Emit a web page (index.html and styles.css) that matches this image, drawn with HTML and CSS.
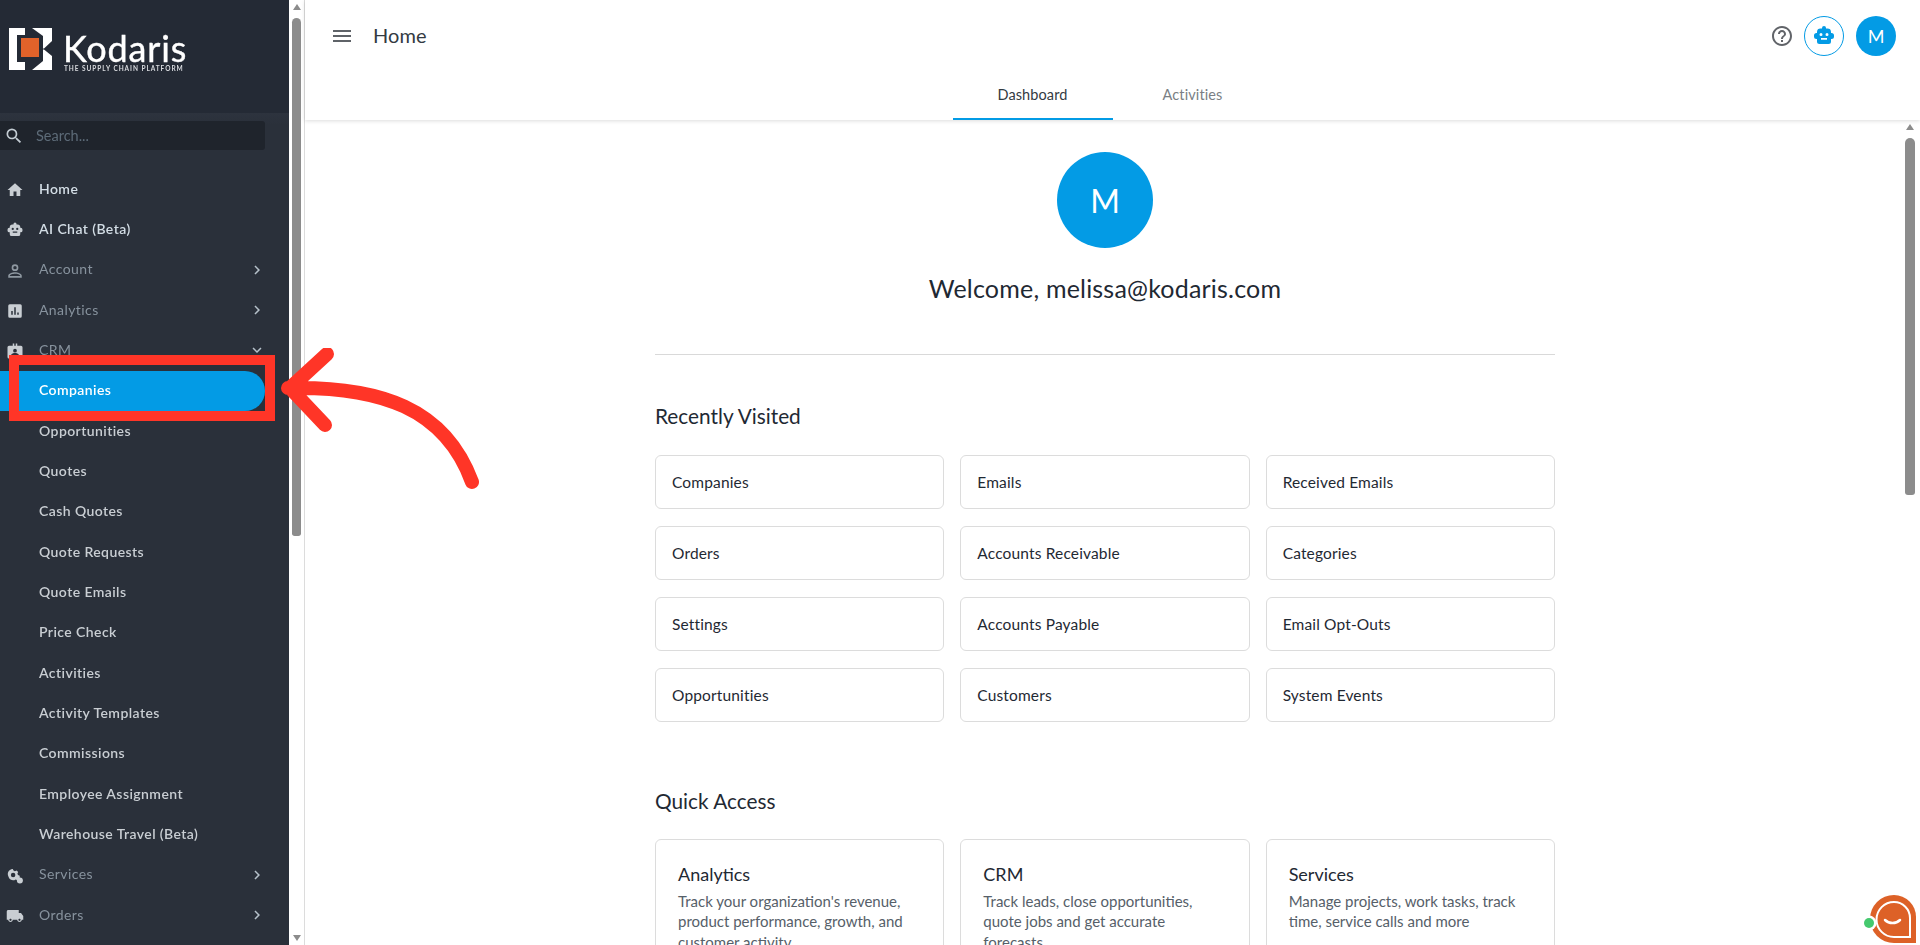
FILE: index.html
```html
<!DOCTYPE html>
<html lang="en">
<head>
    <meta charset="UTF-8">
    <meta name="viewport" content="width=device-width, initial-scale=1.0">
    <title>Kodaris - Home</title>
    <link rel="stylesheet" href="styles.css">
</head>
<body>
    <svg class="icon-defs" width="0" height="0">
        <symbol id="i-home" viewBox="0 0 24 24"><path d="M10 20v-6h4v6h5v-8h3L12 3 2 12h3v8z"/></symbol>
        <symbol id="i-search" viewBox="0 0 24 24"><path d="M15.5 14h-.79l-.28-.27A6.47 6.47 0 0 0 16 9.5 6.5 6.5 0 1 0 9.5 16c1.61 0 3.09-.59 4.23-1.57l.27.28v.79l5 4.99L20.49 19l-4.99-5zm-6 0C7.01 14 5 11.99 5 9.5S7.01 5 9.5 5 14 7.01 14 9.5 11.99 14 9.5 14z"/></symbol>
        <symbol id="i-bot" viewBox="0 0 24 24"><path d="M12 2a2 2 0 0 1 2 2v.6h1.5A3.5 3.5 0 0 1 19 8v1h.5A2.5 2.5 0 0 1 22 11.500v1a2.500 2.500 0 0 1-2.500 2.500H19v2.500a2.500 2.500 0 0 1-2.500 2.500h-9A2.500 2.500 0 0 1 5 17.500V15h-.5A2.500 2.500 0 0 1 2 12.500v-1A2.500 2.500 0 0 1 4.500 9H5V8a3.500 3.500 0 0 1 3.500-3.400H10V4a2 2 0 0 1 2-2zM9 9a1.500 1.500 0 1 0 0 3 1.500 1.500 0 0 0 0-3zm6 0a1.500 1.500 0 1 0 0 3 1.500 1.500 0 0 0 0-3zm-6 5v1.800h6V14z" fill-rule="evenodd"/></symbol>
        <symbol id="i-account" viewBox="0 0 24 24"><path d="M12 3a4.500 4.500 0 1 1 0 9 4.500 4.500 0 0 1 0-9zm0 2.200a2.300 2.300 0 1 0 0 4.600 2.300 2.300 0 0 0 0-4.600zM12 13.500c3.500 0 9 1.700 9 4.500v3H3v-3c0-2.800 5.500-4.500 9-4.500zm0 2.200c-2.800 0-6.800 1.300-6.800 2.300v.8h13.600V18c0-1-4-2.300-6.800-2.300z" fill-rule="evenodd"/></symbol>
        <symbol id="i-analytics" viewBox="0 0 24 24"><path d="M5 3h14a2 2 0 0 1 2 2v14a2 2 0 0 1-2 2H5a2 2 0 0 1-2-2V5a2 2 0 0 1 2-2zm2 9v5h2v-5zm4-5v10h2V7zm4 7v3h2v-3z" fill-rule="evenodd"/></symbol>
        <symbol id="i-crm" viewBox="0 0 24 24"><path d="M9 2h2v3h2V2h2v3h5a2 2 0 0 1 2 2v13a2 2 0 0 1-2 2H4a2 2 0 0 1-2-2V7a2 2 0 0 1 2-2h5zm3 7a2.500 2.500 0 1 0 0 5 2.500 2.500 0 0 0 0-5zm-5 9h10v-1c0-1.500-3.300-2.300-5-2.300S7 15.500 7 17z" fill-rule="evenodd"/></symbol>
        <symbol id="i-services" viewBox="0 0 24 24"><path d="M9 2.500l1 2.300 1.900.8 2.300-1 2 2-1 2.300.8 1.900 2.300 1v2.800l-2.300 1-.8 1.900-2.300-.9a6.500 6.500 0 0 1-6.900.1 7 7 0 0 1-2.800-4.200 7 7 0 0 1 .8-7.500 7 7 0 0 1 4-2.500zM9.500 7.500a3 3 0 1 0 0 6 3 3 0 0 0 0-6z" fill-rule="evenodd"/><circle cx="18.500" cy="18" r="4"/></symbol>
        <symbol id="i-truck" viewBox="0 0 24 24"><path d="M20 8h-3V4H3c-1.100 0-2 .9-2 2v11h2c0 1.660 1.340 3 3 3s3-1.340 3-3h6c0 1.660 1.340 3 3 3s3-1.340 3-3h2v-5l-3-4zM6 18.500c-.83 0-1.500-.67-1.500-1.500s.67-1.500 1.500-1.500 1.500.67 1.500 1.500-.67 1.500-1.500 1.500zm12 0c-.83 0-1.500-.67-1.500-1.500s.67-1.500 1.500-1.500 1.500.67 1.500 1.500-.67 1.500-1.500 1.500z"/></symbol>
        <symbol id="i-right" viewBox="0 0 24 24"><path d="M10 6 8.590 7.410 13.170 12l-4.580 4.590L10 18l6-6z"/></symbol>
        <symbol id="i-down" viewBox="0 0 24 24"><path d="M16.590 8.590 12 13.170 7.410 8.590 6 10l6 6 6-6z"/></symbol>
    </svg>

    <div class="app">
        <aside class="sidebar">
            <div class="brand">
                <svg class="brand-mark" viewBox="0 0 43 42">
                    <path fill="#fff" d="M0 0h16v7H8v27h8v8H0z"/>
                    <path fill="#fff" d="M23 0H43V13L35 20.500H34V8zM34 21.500H35L43 28V42H23L34 33z"/>
                    <rect x="12" y="10" width="18" height="19" fill="#e0622a"/>
                </svg>
                <div class="brand-text">
                    <span class="brand-name">Kodaris</span>
                    <span class="brand-tag">THE SUPPLY CHAIN PLATFORM</span>
                </div>
            </div>
            <div class="search-wrap">
                <div class="search">
                    <svg class="search-icon"><use href="#i-search"/></svg>
                    <span>Search...</span>
                </div>
            </div>
            <nav class="nav">
                <a class="nav-item top-bright"><svg class="nav-icon"><use href="#i-home"/></svg>Home</a>
                <a class="nav-item top-bright"><svg class="nav-icon"><use href="#i-bot"/></svg>AI Chat (Beta)</a>
                <a class="nav-item top"><svg class="nav-icon dim"><use href="#i-account"/></svg>Account<svg class="nav-arrow"><use href="#i-right"/></svg></a>
                <a class="nav-item top"><svg class="nav-icon"><use href="#i-analytics"/></svg>Analytics<svg class="nav-arrow"><use href="#i-right"/></svg></a>
                <a class="nav-item top"><svg class="nav-icon"><use href="#i-crm"/></svg>CRM<svg class="nav-arrow"><use href="#i-down"/></svg></a>
                <a class="nav-item sub active">Companies</a>
                <a class="nav-item sub">Opportunities</a>
                <a class="nav-item sub">Quotes</a>
                <a class="nav-item sub">Cash Quotes</a>
                <a class="nav-item sub">Quote Requests</a>
                <a class="nav-item sub">Quote Emails</a>
                <a class="nav-item sub">Price Check</a>
                <a class="nav-item sub">Activities</a>
                <a class="nav-item sub">Activity Templates</a>
                <a class="nav-item sub">Commissions</a>
                <a class="nav-item sub">Employee Assignment</a>
                <a class="nav-item sub">Warehouse Travel (Beta)</a>
                <a class="nav-item top"><svg class="nav-icon"><use href="#i-services"/></svg>Services<svg class="nav-arrow"><use href="#i-right"/></svg></a>
                <a class="nav-item top"><svg class="nav-icon"><use href="#i-truck"/></svg>Orders<svg class="nav-arrow"><use href="#i-right"/></svg></a>
            </nav>
        </aside>

        <div class="scrollbar side-scroll">
            <span class="arrow-up"></span>
            <span class="thumb"></span>
            <span class="arrow-down"></span>
        </div>

        <main class="main">
            <header class="topbar">
                <div class="topbar-row">
                    <svg class="menu-icon" viewBox="0 0 24 24"><path d="M3 18h18v-2H3v2zm0-5h18v-2H3v2zm0-7v2h18V6H3z"/></svg>
                    <span class="page-title">Home</span>
                    <div class="topbar-actions">
                        <svg class="help-icon" viewBox="0 0 24 24"><path d="M11 18h2v-2h-2v2zm1-16C6.480 2 2 6.480 2 12s4.480 10 10 10 10-4.480 10-10S17.520 2 12 2zm0 18c-4.410 0-8-3.590-8-8s3.590-8 8-8 8 3.590 8 8-3.590 8-8 8zm0-14c-2.210 0-4 1.790-4 4h2c0-1.100.9-2 2-2s2 .9 2 2c0 2-3 1.750-3 5h2c0-2.250 3-2.500 3-5 0-2.210-1.790-4-4-4z"/></svg>
                        <span class="bot-btn"><svg><use href="#i-bot"/></svg></span>
                        <span class="avatar-small">M</span>
                    </div>
                </div>
                <div class="tabs">
                    <span class="tab tab-active">Dashboard</span>
                    <span class="tab">Activities</span>
                </div>
            </header>

            <div class="body-row">
                <div class="content">
                    <div class="welcome">
                        <div class="avatar-big">M</div>
                        <h2 class="welcome-text">Welcome, melissa@kodaris.com</h2>
                    </div>
                    <hr class="divider">

                    <h3 class="section-title">Recently Visited</h3>
                    <div class="link-grid">
                        <a class="link-card">Companies</a>
                        <a class="link-card">Emails</a>
                        <a class="link-card">Received Emails</a>
                        <a class="link-card">Orders</a>
                        <a class="link-card">Accounts Receivable</a>
                        <a class="link-card">Categories</a>
                        <a class="link-card">Settings</a>
                        <a class="link-card">Accounts Payable</a>
                        <a class="link-card">Email Opt-Outs</a>
                        <a class="link-card">Opportunities</a>
                        <a class="link-card">Customers</a>
                        <a class="link-card">System Events</a>
                    </div>

                    <h3 class="section-title quick-title">Quick Access</h3>
                    <div class="quick-grid">
                        <div class="quick-card">
                            <h4>Analytics</h4>
                            <p>Track your organization's revenue, product performance, growth, and customer activity</p>
                        </div>
                        <div class="quick-card">
                            <h4>CRM</h4>
                            <p>Track leads, close opportunities, quote jobs and get accurate forecasts</p>
                        </div>
                        <div class="quick-card">
                            <h4>Services</h4>
                            <p>Manage projects, work tasks, track time, service calls and more</p>
                        </div>
                    </div>
                </div>

                <div class="scrollbar main-scroll">
                    <span class="arrow-up"></span>
                    <span class="thumb"></span>
                    <span class="arrow-down"></span>
                </div>
            </div>
        </main>
    </div>

    <!-- annotation drawn over the screenshot -->
    <div class="callout-box"></div>
    <svg class="callout-arrow" viewBox="0 0 500 200">
        <path d="M472 134C445 60 380 38 288 40M327 6 290 40 325 77"/>
    </svg>

    <svg class="chat-widget" viewBox="0 0 56 52">
        <path fill="#dd6127" d="M33 2a22 22 0 0 1 22 22v26H33a24 24 0 0 1 0-48z"/>
        <path fill="none" stroke="#fff" stroke-width="2" d="M33 9a16 16 0 0 1 16 16v19H33a17.500 17.500 0 0 1 0-35z"/>
        <path fill="none" stroke="#fff" stroke-width="2.500" stroke-linecap="round" d="M24 27c4 4 11 4 15 0"/>
        <circle cx="8" cy="30" r="7.500" fill="#fff"/>
        <circle cx="8" cy="30" r="5" fill="#45c96e"/>
    </svg>
</body>
</html>
```

FILE: styles.css
```css
* {
    box-sizing: border-box;
}
html, body {
    margin: 0;
    height: 945px;
    overflow: hidden;
}
body {
    font-family: Lato, 'Open Sans', sans-serif;
    background-color: #fff;
    color: #1f2933;
}
.icon-defs {
    position: absolute;
}
.app {
    display: flex;
    height: 945px;
}

/* sidebar */
.sidebar {
    width: 289px;
    flex: none;
    background-color: #2a303a;
    overflow: hidden;
    filter: blur(0.45px);
}
.brand {
    height: 113px;
    background-color: #242a35;
    padding: 28px 0 0 9px;
    display: flex;
    gap: 11px;
}
.brand-mark {
    width: 43px;
    height: 42px;
    flex: none;
}
.brand-text {
    display: flex;
    flex-direction: column;
}
.brand-name {
    font-size: 36px;
    line-height: 30px;
    color: #fff;
    margin: 5px 0 2px;
    letter-spacing: 0.85px;
    -webkit-text-stroke: 0.4px #fff;
}
.brand-tag {
    font-size: 6.5px;
    line-height: 8px;
    font-weight: 700;
    color: #d8dade;
    letter-spacing: 0.95px;
    white-space: nowrap;
    margin-left: 1px;
}
.search-wrap {
    height: 56px;
    padding: 8px 24px 0 0;
    background: linear-gradient(#2d333e, #2a303a 12px);
}
.search {
    height: 29px;
    background-color: #1f242c;
    border-radius: 0 3px 3px 0;
    display: flex;
    align-items: center;
    color: #5d6b78;
    font-size: 14.5px;
    padding-left: 4px;
}
.search-icon {
    width: 20px;
    height: 20px;
    fill: #c3ccd3;
    margin-right: 12px;
}
.nav {
    display: flex;
    flex-direction: column;
}
.nav-item {
    height: 40.34px;
    flex: none;
    display: flex;
    align-items: center;
    padding: 0 0 2px 39px;
    font-size: 14px;
    letter-spacing: 0.42px;
    font-weight: 600;
    color: #c9ced3;
    position: relative;
}
.nav-item.top {
    color: #87929d;
    font-weight: 400;
}
.nav-item.top-bright {
    color: #d3dde5;
}
.nav-item.active {
    width: 265px;
    color: #fff;
    background-color: #039be5;
    border-radius: 0 21px 21px 0;
}
.nav-icon {
    position: absolute;
    left: 6px;
    top: 12px;
    width: 18px;
    height: 18px;
    fill: #c9ced3;
}
.nav-icon.dim {
    fill: #8f98a1;
}
.nav-arrow {
    position: absolute;
    left: 248px;
    top: 11px;
    width: 18px;
    height: 18px;
    fill: #b5c0c9;
}

/* fake native scrollbars */
.scrollbar {
    display: flex;
    flex-direction: column;
    align-items: center;
    flex: none;
    width: 9px;
}
.side-scroll {
    margin: 0 3px;
    height: 945px;
    padding-top: 4px;
}
.main-scroll {
    margin: 0 5px 0 0;
    width: 10px;
    height: 825px;
    padding-top: 4px;
}
.arrow-up, .arrow-down {
    width: 0;
    height: 0;
    flex: none;
    border-left: 4.5px solid transparent;
    border-right: 4.5px solid transparent;
}
.arrow-up {
    border-bottom: 6px solid #8c8c8c;
}
.arrow-down {
    border-top: 6px solid #8c8c8c;
    margin-top: auto;
    margin-bottom: 4px;
}
.thumb {
    width: 100%;
    background-color: #8c8c8c;
    border-radius: 5px 5px 3px 3px;
}
.side-scroll .thumb {
    margin-top: 8px;
    height: 518px;
}
.main-scroll .thumb {
    margin-top: 8px;
    height: 357px;
}

/* main */
.main {
    flex: 1;
    min-width: 0;
    border-left: 1px solid #dcdcdc;
    display: flex;
    flex-direction: column;
}
.topbar {
    height: 120px;
    flex: none;
    position: relative;
    box-shadow: 0 1px 4px rgba(0, 0, 0, 0.14);
}
.topbar-row {
    height: 71px;
    display: flex;
    align-items: center;
    padding: 0 24px 0 25px;
}
.menu-icon {
    width: 24px;
    height: 24px;
    fill: #5f6368;
}
.page-title {
    font-size: 20px;
    letter-spacing: 0.1px;
    margin: 0 0 1px 19px;
    color: #333a42;
}
.topbar-actions {
    margin-left: auto;
    display: flex;
    align-items: center;
    padding-top: 1px;
}
.help-icon {
    width: 24px;
    height: 24px;
    fill: #616469;
    margin-right: 10px;
}
.bot-btn {
    width: 40px;
    height: 40px;
    border: 1px solid #039be5;
    border-radius: 50%;
    display: flex;
    align-items: center;
    justify-content: center;
}
.bot-btn svg {
    width: 24px;
    height: 24px;
    fill: #039be5;
}
.avatar-small {
    width: 40px;
    height: 40px;
    margin-left: 12px;
    background-color: #039be5;
    border-radius: 50%;
    color: #fff;
    font-size: 18px;
    display: flex;
    align-items: center;
    justify-content: center;
}
.tabs {
    display: flex;
    justify-content: center;
    height: 49px;
}
.tab {
    width: 160px;
    display: flex;
    align-items: center;
    justify-content: center;
    font-size: 14.5px;
    letter-spacing: 0.1px;
    color: #7a7f85;
    padding-bottom: 2px;
}
.tab-active {
    color: #333a42;
    padding-bottom: 0;
    border-bottom: 2px solid #039be5;
}
.body-row {
    flex: 1;
    min-height: 0;
    display: flex;
    overflow: hidden;
}
.content {
    flex: 1;
    min-width: 0;
    padding: 32px 350px 0;
}
.welcome {
    display: flex;
    flex-direction: column;
    align-items: center;
}
.avatar-big {
    width: 96px;
    height: 96px;
    background-color: #039be5;
    border-radius: 50%;
    color: #fff;
    font-size: 32px;
    display: flex;
    align-items: center;
    justify-content: center;
}
.welcome-text {
    margin: 23px 0 0;
    font-size: 25px;
    letter-spacing: 0.2px;
    line-height: 34px;
    font-weight: 400;
    color: #1f2933;
}
.divider {
    border: none;
    border-top: 1px solid #d9d9d9;
    margin: 49px 0 0;
}
.section-title {
    margin: 48px 0 0;
    font-size: 20.8px;
    line-height: 26px;
    font-weight: 400;
    color: #1f2933;
}
.link-grid {
    display: grid;
    grid-template-columns: repeat(3, 1fr);
    gap: 17px 16px;
    margin-top: 26px;
}
.link-card {
    height: 54px;
    border: 1px solid #dcdcdc;
    border-radius: 6px;
    display: flex;
    align-items: center;
    padding-left: 16px;
    font-size: 15.5px;
    letter-spacing: 0.15px;
    color: #1f2933;
}
.quick-title {
    margin-top: 66px;
}
.quick-grid {
    display: grid;
    grid-template-columns: repeat(3, 1fr);
    gap: 16px;
    margin-top: 25px;
}
.quick-card {
    height: 180px;
    border: 1px solid #dcdcdc;
    border-radius: 6px;
    padding: 22px 22px;
}
.quick-card h4 {
    margin: 0;
    font-size: 18px;
    line-height: 24px;
    font-weight: 400;
    color: #1f2933;
}
.quick-card p {
    margin: 5px 0 0;
    font-size: 15px;
    line-height: 20.4px;
    color: #566069;
}

/* annotation */
.callout-box {
    position: absolute;
    left: 9px;
    top: 355px;
    width: 266px;
    height: 66px;
    border: 10px solid #ff3527;
}
.callout-arrow {
    position: absolute;
    left: 0;
    top: 348px;
    width: 500px;
    height: 200px;
    fill: none;
    stroke: #ff3527;
    stroke-width: 14px;
    stroke-linecap: round;
    stroke-linejoin: round;
}
.chat-widget {
    position: absolute;
    left: 1861px;
    top: 893px;
    width: 56px;
    height: 52px;
}
```
